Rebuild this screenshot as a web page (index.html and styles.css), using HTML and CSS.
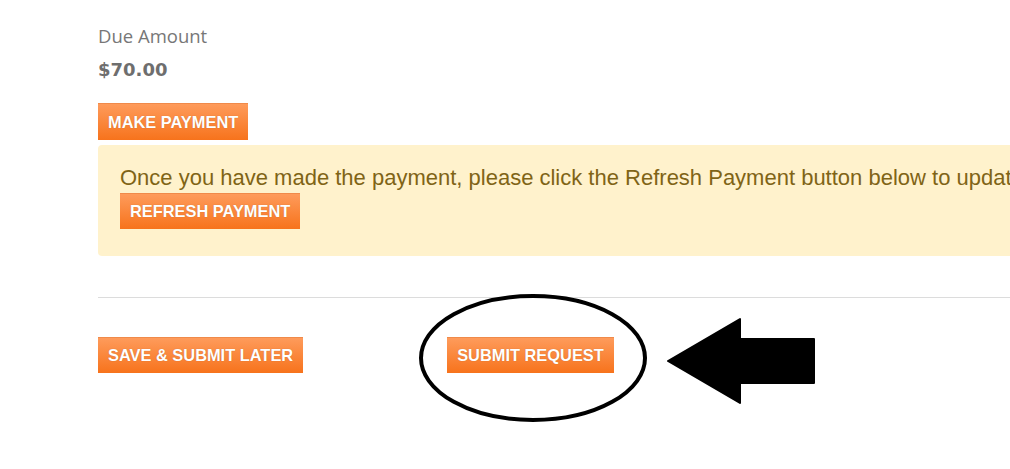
FILE: index.html
```html
<!DOCTYPE html>
<html>
<head>
<meta charset="utf-8">
<link rel="stylesheet" href="styles.css">
</head>
<body>
<div class="page">
  <div class="due">
    <div class="due-label">Due Amount</div>
    <div class="due-value">$70.00</div>
  </div>
  <div class="pay-row"><button class="btn">MAKE PAYMENT</button></div>
  <div class="alert">
    <p class="alert-text">Once you have made the payment, please click the Refresh Payment button below to update the payment status.</p>
    <button class="btn">REFRESH PAYMENT</button>
  </div>
  <hr class="divider">
  <div class="actions">
    <button class="btn">SAVE &amp; SUBMIT LATER</button>
    <button class="btn">SUBMIT REQUEST</button>
  </div>
</div>
<svg class="annot" width="1010" height="469" viewBox="0 0 1010 469">
  <ellipse cx="533" cy="358" rx="112" ry="62" fill="none" stroke="#000" stroke-width="4"/>
  <path d="M668 361 L740 319 L740 339 L814 339 L814 383 L740 383 L740 403 Z" fill="#000" stroke="#000" stroke-width="2" stroke-linejoin="round"/>
</svg>
</body>
</html>
```

FILE: styles.css
```css
html, body {
  margin: 0;
  padding: 0;
  background: #fff;
  width: 1010px;
  height: 469px;
  overflow: hidden;
  position: relative;
}
.page {
  padding: 22px 0 0 98px;
  display: flex;
  flex-direction: column;
  align-items: flex-start;
}
.due {
  font-family: "Open Sans", "Liberation Sans", sans-serif;
  font-size: 18.5px;
  color: #777;
}
.due-label {
  line-height: 28px;
}
.due-value {
  font-family: "DejaVu Sans", Verdana, sans-serif;
  font-weight: 700;
  font-size: 18px;
  line-height: 28px;
  margin-top: 6px;
  color: #6e6e6e;
}
.pay-row {
  margin-top: 19px;
}
.btn {
  display: inline-block;
  font-family: "Liberation Sans", Arial, sans-serif;
  font-weight: 700;
  font-size: 16.4px;
  color: #fff;
  text-shadow: 0 0 1px rgba(0,0,0,0.25);
  background: linear-gradient(#fe9b5b, #f7731c);
  border: none;
  border-top: 1px solid #f08a4a;
  border-radius: 0;
  height: 37px;
  padding: 0 10px;
  margin: 0;
  cursor: pointer;
}
.alert {
  margin-top: 5px;
  width: 930px;
  box-sizing: border-box;
  background: #fff2cc;
  border-radius: 4px;
  padding: 17px 22px 26px 22px;
  height: 111px;
  overflow: hidden;
}
.alert-text {
  margin: 0;
  font-family: "Liberation Sans", Arial, sans-serif;
  font-size: 22px;
  line-height: 31px;
  color: #7f6416;
  white-space: nowrap;
}
.alert .btn {
  height: 36px;
}
.divider {
  width: 912px;
  margin: 41px 0 0 0;
  border: 0;
  border-top: 1px solid #dcdcdc;
  height: 0;
}
.actions {
  margin-top: 39px;
  display: flex;
  gap: 144px;
}
.actions .btn {
  height: 36px;
}
.annot {
  position: absolute;
  left: 0;
  top: 0;
  pointer-events: none;
}
```
